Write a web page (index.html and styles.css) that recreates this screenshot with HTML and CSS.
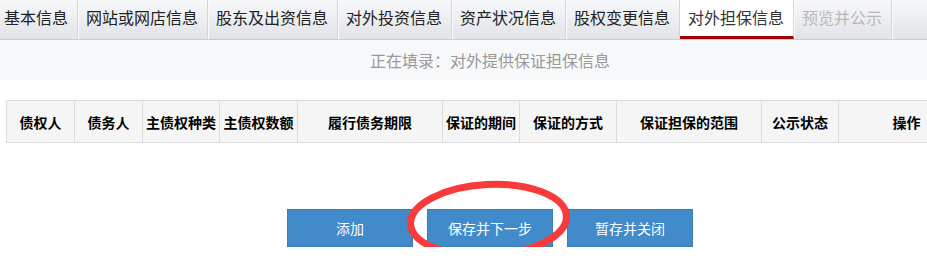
FILE: index.html
```html
<!DOCTYPE html>
<html lang="zh-CN">
<head>
<meta charset="utf-8">
<title>对外担保信息</title>
<link rel="stylesheet" href="styles.css">
</head>
<body>
<div class="page">
  <ul class="tabs">
    <li class="tab">基本信息</li>
    <li class="tab">网站或网店信息</li>
    <li class="tab">股东及出资信息</li>
    <li class="tab">对外投资信息</li>
    <li class="tab">资产状况信息</li>
    <li class="tab">股权变更信息</li>
    <li class="tab active">对外担保信息</li>
    <li class="tab disabled">预览并公示</li>
  </ul>
  <div class="status">正在填录：对外提供保证担保信息</div>
  <table class="grid">
    <colgroup>
      <col class="w68"><col class="w68"><col class="w77"><col class="w78"><col class="w145">
      <col class="w77"><col class="w97"><col class="w145"><col class="w77"><col class="w136">
    </colgroup>
    <thead>
      <tr>
        <th>债权人</th>
        <th>债务人</th>
        <th>主债权种类</th>
        <th>主债权数额</th>
        <th>履行债务期限</th>
        <th>保证的期间</th>
        <th>保证的方式</th>
        <th>保证担保的范围</th>
        <th>公示状态</th>
        <th>操作</th>
      </tr>
    </thead>
  </table>
  <div class="actions">
    <button class="btn" type="button">添加</button>
    <button class="btn" type="button">保存并下一步</button>
    <button class="btn" type="button">暂存并关闭</button>
  </div>
  <svg class="mark" width="180" height="90" viewBox="0 0 180 90" aria-hidden="true">
    <ellipse cx="88.5" cy="45" rx="78" ry="35.5" fill="none" stroke="#f93a3a" stroke-width="7" transform="rotate(-3 88.5 45)"/>
  </svg>
</div>
</body>
</html>
```

FILE: styles.css
```css
html, body {
  margin: 0;
  padding: 0;
  overflow: hidden;
  background: #fff;
}

body {
  font-family: "Noto Sans CJK SC", "Microsoft YaHei", "Noto Sans", sans-serif;
  color: #222;
}

.page {
  position: relative;
  width: 980px;
}

.tabs {
  list-style: none;
  margin: 0;
  padding: 0;
  display: flex;
  height: 39px;
  background: linear-gradient(#f7f8fa, #e0e3e8);
  border-bottom: 1px solid #c8cdd5;
}

.tab {
  height: 36px;
  line-height: 34px;
  padding: 0 9px 0 8px;
  font-size: 16px;
  color: #222;
  border-right: 1px solid #d2d6dc;
  box-shadow: 1px 0 0 #f9fafb;
  border-bottom: 3px solid transparent;
  white-space: nowrap;
}

.tab:first-child {
  padding-left: 4px;
}

.tab.active {
  background: #fff;
  color: #333;
  border-bottom-color: #a00000;
}

.tab.disabled {
  color: #b8b8b8;
}

.status {
  height: 40px;
  line-height: 40px;
  background: #f7f8fa;
  color: #999;
  font-size: 16px;
  text-align: center;
}

.grid {
  margin: 20px 6px 0;
  width: 968px;
  table-layout: fixed;
  border-collapse: collapse;
}

.w68 { width: 68px; }
.w77 { width: 77px; }
.w78 { width: 78px; }
.w97 { width: 97px; }
.w136 { width: 136px; }
.w145 { width: 145px; }

.grid th {
  height: 41px;
  padding: 0;
  background: #f5f5f5;
  border: 1px solid #dcdcdc;
  font-size: 14px;
  font-weight: bold;
  color: #000;
  text-align: center;
  white-space: nowrap;
}

.actions {
  display: flex;
  justify-content: center;
  gap: 14px;
  margin-top: 66px;
}

.btn {
  width: 126px;
  height: 38px;
  margin: 0;
  padding: 0;
  background: #428bca;
  border: 1px solid #3a7db8;
  color: #fff;
  font-family: inherit;
  font-size: 14px;
  cursor: pointer;
}

.mark {
  position: absolute;
  left: 400px;
  top: 175px;
}
```
